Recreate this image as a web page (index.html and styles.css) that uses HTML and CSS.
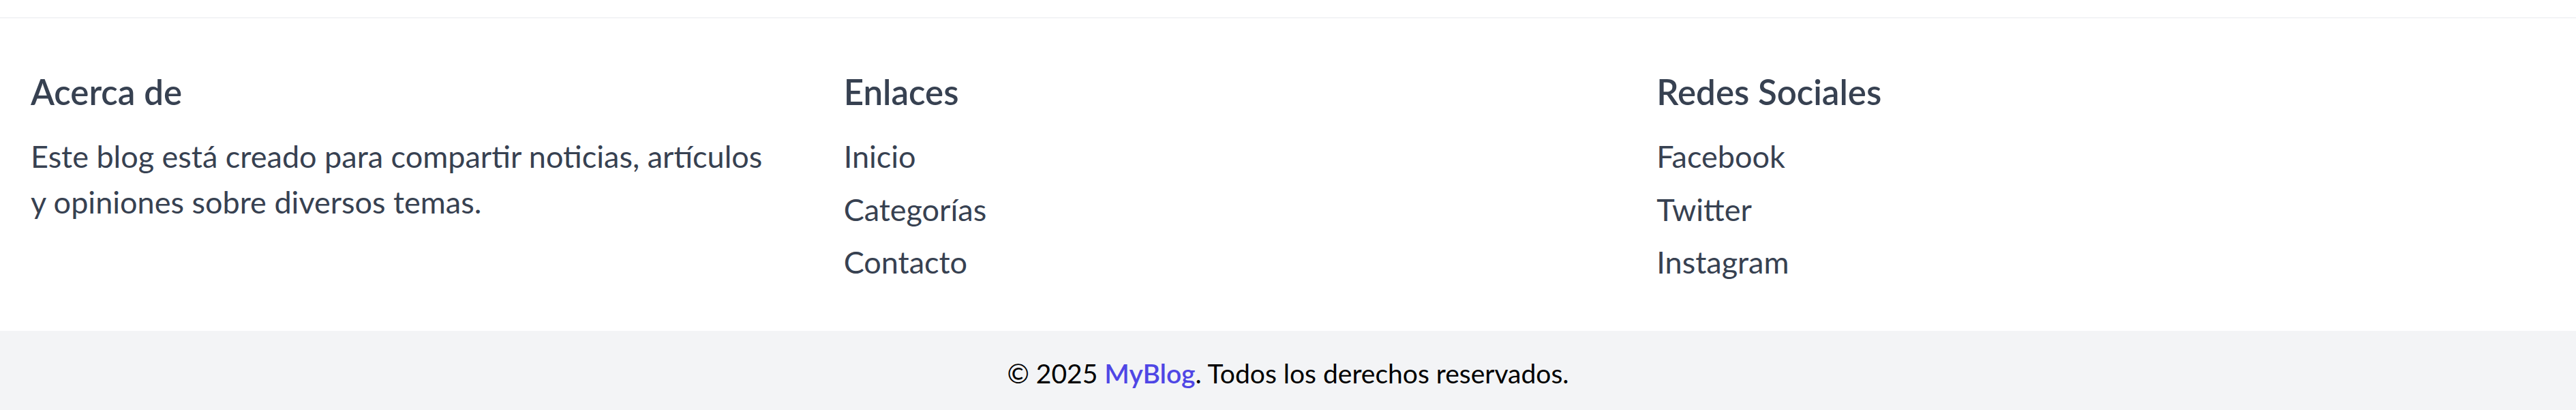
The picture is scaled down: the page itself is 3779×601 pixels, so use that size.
FILE: index.html
```html
<!DOCTYPE html>
<html lang="es">
<head>
<meta charset="utf-8">
<title>MyBlog</title>
<link rel="stylesheet" href="styles.css">
</head>
<body>
<div class="page-end"></div>
<footer class="site-footer">
  <div class="footer-grid">
    <section class="footer-col">
      <h3 class="footer-title">Acerca de</h3>
      <p class="footer-text">Este blog está creado para compartir noticias, artículos y opiniones sobre diversos temas.</p>
    </section>
    <section class="footer-col">
      <h3 class="footer-title">Enlaces</h3>
      <ul class="footer-links">
        <li><a href="#">Inicio</a></li>
        <li><a href="#">Categorías</a></li>
        <li><a href="#">Contacto</a></li>
      </ul>
    </section>
    <section class="footer-col">
      <h3 class="footer-title">Redes Sociales</h3>
      <ul class="footer-links">
        <li><a href="#">Facebook</a></li>
        <li><a href="#">Twitter</a></li>
        <li><a href="#">Instagram</a></li>
      </ul>
    </section>
  </div>
</footer>
<div class="copyright">
  <p>© 2025 <span class="brand">MyBlog</span>. Todos los derechos reservados.</p>
</div>
</body>
</html>
```
FILE: styles.css
```css
html, body {
  margin: 0;
  padding: 0;
  background: #ffffff;
}
body {
  font-family: Lato, "Noto Sans", sans-serif;
  color: #000;
  overflow: hidden;
}
.page-end {
  height: 25px;
  background: #ffffff;
}
.site-footer {
  border-top: 2px solid #f3f4f6;
  background: #ffffff;
  padding: 72px 233px 67px 45px;
  color: #374151;
}
.footer-grid {
  display: grid;
  grid-template-columns: repeat(3, 1fr);
  column-gap: 77px;
}
.footer-title {
  margin: 0 0 26px 0;
  font-size: 51px;
  line-height: 71px;
  font-weight: 600;
  color: #374151;
}
.footer-text {
  margin: 0;
  font-size: 45px;
  line-height: 67px;
  max-width: 1095px;
}
.footer-links {
  list-style: none;
  margin: 0;
  padding: 0;
  display: flex;
  flex-direction: column;
  gap: 10.5px;
}
.footer-links li {
  font-size: 45px;
  line-height: 67px;
}
.footer-links a {
  color: #374151;
  text-decoration: none;
}
.copyright {
  background: #f3f4f6;
  padding: 33px 0 40px;
  text-align: center;
}
.copyright p {
  margin: 0;
  font-size: 39px;
  line-height: 58px;
  color: #000;
}
.brand {
  color: #4f46e5;
  font-weight: 600;
}
```
